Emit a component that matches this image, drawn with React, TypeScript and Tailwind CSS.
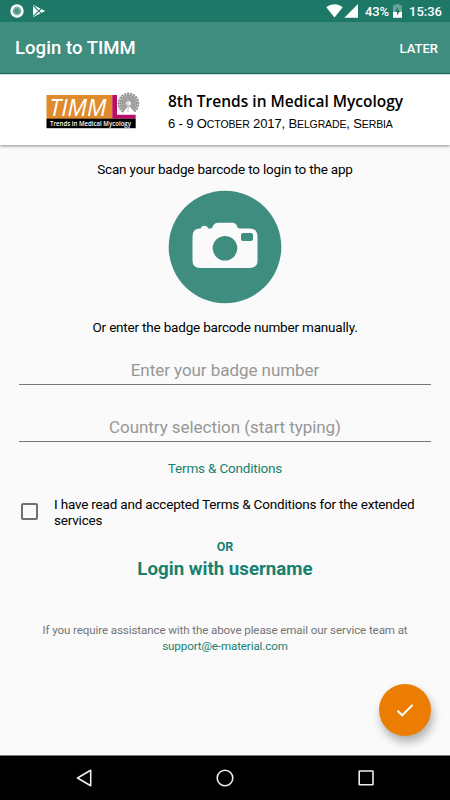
import React from "react";

const petals = Array.from( { length: 17 }, ( _, idx ) => -232 + idx * 17.5 );

const StatusBar: React.FC = () => (
  <div className="flex h-[22px] shrink-0 items-center bg-[#1d7868] pl-[10px] pr-2 text-white">
    <svg className="h-[14px] w-[14px]" viewBox="0 0 14 14">
      <circle cx="7" cy="7" r="6.7" fill="#fff" />
      <circle cx="7" cy="7" r="4.4" fill="#82b5aa" />
      <circle cx="7" cy="7" r="2.7" fill="#4f9585" />
    </svg>
    <svg className="ml-[8px] h-[14px] w-[14px]" viewBox="0 0 14 14">
      <path d="M1 .8L13.2 7L1 13.2Z" fill="#fff" />
      <path d="M1.3 1.6L9.2 9.3M1.3 12.4L9.2 4.7" stroke="#1d7868" strokeWidth="1.1" />
    </svg>
    <svg className="ml-auto h-[14px] w-[17px]" viewBox="0 0 17 14">
      <path d="M.3 3.2C5-.7 12-.7 16.7 3.2L8.5 13.6Z" fill="#fff" />
    </svg>
    <svg className="ml-[1px] h-[14px] w-[14px]" viewBox="0 0 14 14">
      <path d="M14 0V13.7H.3Z" fill="#fff" />
    </svg>
    <span className="ml-[7px] w-[25px] whitespace-nowrap pt-px text-[13px] font-medium leading-[22px] tracking-[-0.1px]">43%</span>
    <svg className="ml-[3px] h-[14px] w-[9px]" viewBox="0 0 9 14">
      <path d="M2.7 0H6.3V1.3H9V7.6H0V1.3H2.7Z" fill="#67a498" />
      <path d="M0 7.6H9V13.8H0Z" fill="#fff" />
      <path d="M5.2 3L1.9 7.8H4V11.5L7.2 6.7H5.2Z" fill="#1d7868" />
    </svg>
    <span className="ml-[7px] w-[33px] whitespace-nowrap pt-px text-[13px] font-medium leading-[22px]">15:36</span>
  </div>
);

const Logo: React.FC = () => (
  <svg className="h-[40px] w-[96px] overflow-visible" viewBox="0 0 96 40">
    <rect x=".5" y="6" width="66" height="24" fill="#df8a2c" />
    <path d="M66.3 6H71V25.7H89.7V29.7H66.3Z" fill="#b90e69" />
    <rect x=".5" y="29.7" width="89.2" height="9.5" fill="#000" />
    <text x="3.5" y="26.7" textLength="57" lengthAdjust="spacingAndGlyphs" fill="#fff" className="font-['Open_Sans',sans-serif] text-[24px] italic">TIMM</text>
    <text x="4" y="36.8" textLength="81" lengthAdjust="spacingAndGlyphs" fill="#fff" className="font-['Open_Sans',sans-serif] text-[7.5px] font-semibold">Trends in Medical Mycology</text>
    {/* spore head drawn as a fan of chains */}
    <g fill="none">
      {petals.map( ( angle ) => (
        <g key={angle} transform={`translate(82.5 14.5) rotate(${angle})`}>
          <path d="M3 0H10.7" stroke="#b4b4b4" strokeWidth="2.5" />
          <path d="M3.4 0H10.7" stroke="#858585" strokeWidth="1.7" strokeDasharray="1.2 .9" />
        </g>
      ) )}
      <path d="M82 13V23" strokeWidth="1.3" stroke="#ccc" />
      <circle cx="82.5" cy="14.5" r="2.7" strokeWidth="1" stroke="#a5a5a5" />
    </g>
  </svg>
);

const Camera: React.FC = () => (
  <svg className="h-[114px] w-[114px]" viewBox="0 0 114 114">
    <circle cx="57" cy="57" r="56.3" fill="#3f8d7f" />
    <path d="M32 38.5H32.8C33 34.8 39.8 34.8 40 38.5H42C44.5 38.5 44 37.8 45 36Q46.7 32.8 50 32.8H64.5Q67.5 32.8 69 36C69.7 37.8 70 38.5 72 38.5H81.5Q89.5 38.5 89.5 46.5V70.5Q89.5 78 81.5 78H32Q24.5 78 24.5 70.5V46.5Q24.5 38.5 32 38.5Z" fill="#fafafa" />
    <circle cx="57" cy="58.3" r="12.3" fill="#3f8d7f" />
    <rect x="73" y="43" width="12" height="8" rx="2" fill="#3f8d7f" />
  </svg>
);

const App: React.FC = () =>
{
  return (
    <div className="relative flex h-[800px] w-[450px] flex-col overflow-hidden bg-[#fafafa] font-[Roboto,sans-serif] text-black">
      <StatusBar />
      <header className="flex h-[52px] shrink-0 items-center justify-between border-b border-[#1d7868] bg-[#3f8d7f] pl-[15px] pr-[12px] pt-[3px] text-white">
        <span className="text-[18.5px] font-medium tracking-[0.06px]">Login to TIMM</span>
        <span className="text-[13px] font-medium">LATER</span>
      </header>
      <section className="flex h-[71px] shrink-0 items-start border-t border-[#cbdcd8] bg-white pl-[46px] shadow-[0_1px_3px_rgba(0,0,0,0.45)]">
        <div className="mt-[14px]">
          <Logo />
        </div>
        <div className="ml-[26px] mt-[16px] whitespace-nowrap">
          <h1 className="font-['Open_Sans',sans-serif] text-[15.5px] font-semibold leading-[20px]">8th Trends in Medical Mycology</h1>
          <p className="mt-[5px] font-['Liberation_Sans',sans-serif] text-[13px] leading-[16px] tracking-[-0.13px]">
            6 - 9 O<span className="text-[10.5px]">CTOBER</span> 2017, B<span className="text-[10.5px]">ELGRADE</span>, S<span className="text-[10.5px]">ERBIA</span>
          </p>
        </div>
      </section>

      <main className="flex flex-1 flex-col items-center whitespace-nowrap">
        <p className="mt-[16px] text-[13.5px] leading-[16px] tracking-[-0.19px]">Scan your badge barcode to login to the app</p>
        <div className="mt-[13px]">
          <Camera />
        </div>
        <p className="mt-[15px] text-[13.5px] leading-[16px] tracking-[-0.19px]">Or enter the badge barcode number manually.</p>
        <div className="mt-[17px] h-[33px] w-[412px] border-b border-[#777] pt-[7px] text-center text-[17px] leading-[22px] tracking-[-0.05px] text-[#979797]">Enter your badge number</div>
        <div className="mt-[24px] h-[33px] w-[412px] border-b border-[#777] pt-[7px] text-center text-[17px] leading-[22px] tracking-[-0.05px] text-[#979797]">Country selection (start typing)</div>
        <p className="mt-[18px] text-[13.5px] leading-[16px] tracking-[-0.19px] text-[#178170]">Terms &amp; Conditions</p>
        <div className="mt-[20px] flex w-[412px] items-start">
          <span className="ml-[2px] mt-[7px] h-[17px] w-[17px] shrink-0 rounded-[2px] border-2 border-[#707070]" />
          <p className="ml-[16px] text-[13.5px] leading-[16px] tracking-[-0.19px]">I have read and accepted Terms &amp; Conditions for the extended<br />services</p>
        </div>
        <p className="mt-[11px] text-[12.5px] font-bold leading-[16px] text-[#178170]">OR</p>
        <p className="mt-[3px] text-[18.7px] font-bold leading-[22px] text-[#178170]">Login with username</p>
        <p className="mt-[43px] text-center text-[11.6px] leading-[15.5px] tracking-[-0.11px] text-[#747474]">
          If you require assistance with the above please email our service team at<br />
          <span className="text-[#178170]">support@e-material.com</span>
        </p>
      </main>

      <button className="absolute left-[379px] top-[684px] flex h-[52px] w-[52px] items-center justify-center rounded-full bg-[#eb7d02] shadow-[2px_6px_10px_rgba(0,0,0,0.3)]">
        <svg className="h-[22px] w-[22px]" viewBox="0 0 22 22">
          <path d="M3.5 11.8L8.2 16.3L18.6 5.9" fill="none" stroke="#fff" strokeWidth="2" />
        </svg>
      </button>

      <nav className="flex h-[45px] shrink-0 items-center border-t border-[#737b79] bg-black pl-[76px]">
        <svg className="h-[18px] w-[16px]" viewBox="0 0 16 18">
          <path d="M14.7 1.3V16.7L1.5 9Z" fill="none" stroke="#eee" strokeWidth="1.6" strokeLinejoin="round" />
        </svg>
        <svg className="ml-[124px] h-[18px] w-[18px]" viewBox="0 0 18 18">
          <circle cx="9" cy="9" r="7.8" fill="none" stroke="#eee" strokeWidth="1.6" />
        </svg>
        <svg className="ml-[124px] h-[18px] w-[18px]" viewBox="0 0 18 18">
          <rect x="1.2" y="2" width="13.8" height="13.8" rx=".6" fill="none" stroke="#eee" strokeWidth="1.6" />
        </svg>
      </nav>
    </div>
  );
};

export default App;
